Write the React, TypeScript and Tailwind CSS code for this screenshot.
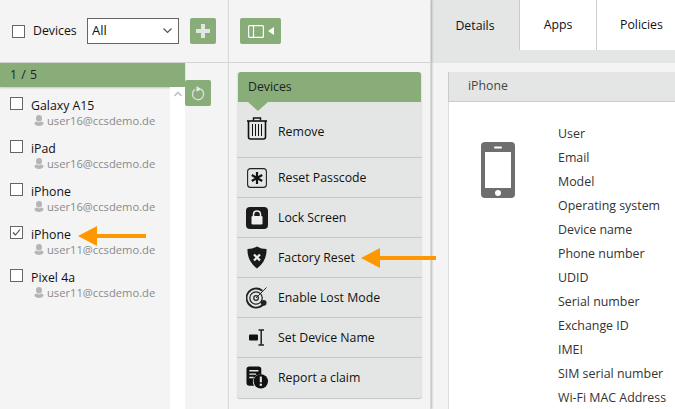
const devices = [
  { name: "Galaxy A15", user: "user16@ccsdemo.de" },
  { name: "iPad", user: "user16@ccsdemo.de" },
  { name: "iPhone", user: "user16@ccsdemo.de" },
  { name: "iPhone", user: "user11@ccsdemo.de", checked: true },
  { name: "Pixel 4a", user: "user11@ccsdemo.de" },
];

const fields = [
  "User",
  "Email",
  "Model",
  "Operating system",
  "Device name",
  "Phone number",
  "UDID",
  "Serial number",
  "Exchange ID",
  "IMEI",
  "SIM serial number",
  "Wi-Fi MAC Address",
];

function Checkbox({ checked }: { checked?: boolean }) {
  return (
    <span className="flex h-[13px] w-[13px] shrink-0 items-center justify-center border border-[#666] bg-white">
      {checked && (
        <svg width="11" height="11" viewBox="0 0 11 11" fill="none">
          <path d="M2 5.5 L4.5 8 L9 2.5" stroke="#444" strokeWidth="1.1" />
        </svg>
      )}
    </span>
  );
}

function Arrow({ width }: { width: number }) {
  return (
    <svg width={width} height="20" viewBox={`0 0 ${width} 20`} className="shrink-0">
      <path d={`M0 10 L19 0 V8 H${width} V12 H19 V20 Z`} fill="#ff9800" />
    </svg>
  );
}

function UserIcon() {
  return (
    <svg width="10" height="11" viewBox="0 0 10 11" fill="#b5b5b5">
      <ellipse cx="5" cy="3.2" rx="3" ry="3.2" />
      <path d="M0.5 8 Q1 6.8 2.6 6.6 Q5 8.2 7.4 6.6 Q9 6.8 9.5 8 V9 Q8 11 5 11 Q2 11 0.5 9 Z" />
    </svg>
  );
}

function TrashIcon() {
  return (
    <svg width="22" height="23" viewBox="0 0 22 23" fill="none" stroke="#111">
      <path d="M1 4 H21" strokeWidth="1.6" />
      <path d="M7.5 3.5 V1 H14.5 V3.5" strokeWidth="1.4" />
      <path d="M2.5 4 V20 Q2.5 22 4.5 22 H17.5 Q19.5 22 19.5 20 V4" strokeWidth="1.6" />
      <path d="M6.5 7 V19 M9.5 7 V19 M12.5 7 V19 M15.5 7 V19" strokeWidth="1" />
    </svg>
  );
}

function PasscodeIcon() {
  return (
    <svg width="20" height="20" viewBox="0 0 20 20" fill="none">
      <rect x="0.6" y="0.6" width="18.8" height="18.8" rx="3" stroke="#222" strokeWidth="1.1" />
      <path d="M10 4 V16 M4.8 7 L15.2 13 M15.2 7 L4.8 13" stroke="#111" strokeWidth="2.2" />
    </svg>
  );
}

function LockIcon() {
  return (
    <svg width="22" height="22" viewBox="0 0 22 22">
      <rect width="22" height="22" rx="4" fill="#1a1a1a" />
      <path d="M7.5 9.5 V7.5 Q7.5 4 11 4 Q14.5 4 14.5 7.5 V9.5" fill="none" stroke="#eee" strokeWidth="1.5" />
      <rect x="5.5" y="9" width="11" height="8.5" rx="1.2" fill="#eee" />
    </svg>
  );
}

function ShieldIcon() {
  return (
    <svg width="20" height="23" viewBox="0 0 20 23">
      <path d="M10 0.5 Q14 3 19.5 3 Q20 15 10 22.5 Q0 15 0.5 3 Q6 3 10 0.5 Z" fill="#1a1a1a" />
      <path d="M7 8.5 L13 14.5 M13 8.5 L7 14.5" stroke="#eee" strokeWidth="2.2" />
    </svg>
  );
}

function RadarIcon() {
  return (
    <svg width="23" height="23" viewBox="0 0 23 23" fill="none" stroke="#222">
      <path d="M17 4.4 A10 10 0 1 0 20 15.5" strokeWidth="1.9" />
      <circle cx="10.5" cy="12" r="6.5" strokeWidth="1.3" />
      <circle cx="10.5" cy="12" r="2.4" strokeWidth="1.3" />
      <path d="M10.5 12 L21.5 1" strokeWidth="1" />
      <circle cx="18.5" cy="17" r="3" fill="#222" stroke="none" />
    </svg>
  );
}

function RenameIcon() {
  return (
    <svg width="16" height="17" viewBox="0 0 16 17" fill="none">
      <rect x="0" y="5.5" width="9" height="6" rx="1" fill="#111" />
      <path d="M9.5 1 H15 M9.5 16 H15 M12.2 1 V16" stroke="#222" strokeWidth="1.5" />
    </svg>
  );
}

function ClaimIcon() {
  return (
    <svg width="23" height="23" viewBox="0 0 23 23">
      <path d="M0.5 3 Q0.5 0 3.5 0 H13 Q16 0 16 3 V8.5 A7.5 7.5 0 0 0 8.5 20 H3.5 Q0.5 20 0.5 17 Z" fill="#111" />
      <path d="M3.5 4.5 H13 M3.5 8 H10.5 M3.5 11.5 H8" stroke="#e4e6e5" strokeWidth="1.5" />
      <circle cx="15.5" cy="15.5" r="7.5" fill="#111" />
      <path d="M15.5 10.5 V16.5" stroke="#e4e6e5" strokeWidth="2.2" />
      <circle cx="15.5" cy="19.2" r="1.3" fill="#e4e6e5" />
    </svg>
  );
}

const actions = [
  { label: "Reset Passcode", icon: <PasscodeIcon /> },
  { label: "Lock Screen", icon: <LockIcon /> },
  { label: "Factory Reset", icon: <ShieldIcon />, arrow: true },
  { label: "Enable Lost Mode", icon: <RadarIcon /> },
  { label: "Set Device Name", icon: <RenameIcon /> },
  { label: "Report a claim", icon: <ClaimIcon /> },
];

export default function App() {
  return (
    <div className="flex h-[409px] w-[675px] overflow-hidden bg-[#f4f4f4] font-['Open_Sans','Noto_Sans',sans-serif] text-[12.3px] text-[#111]">
      {/* device list */}
      <div className="w-[228px] shrink-0">
        <div className="flex h-[63px] items-center border-b border-[#d4d4d4] pl-3">
          <Checkbox />
          <span className="ml-2 w-[54px]">Devices</span>
          <div className="flex h-[26px] w-[92px] items-center justify-between border border-[#666] bg-white pl-1 pr-1.5 text-[13px]">
            All
            <svg width="9" height="6" viewBox="0 0 9 6" fill="none">
              <path d="M0.5 0.5 L4.5 4.5 L8.5 0.5" stroke="#555" strokeWidth="1.2" />
            </svg>
          </div>
          <button className="ml-[11px] flex h-[26px] w-[26px] items-center justify-center rounded-[2px] bg-[#88ad78]">
            <svg width="14" height="14" viewBox="0 0 14 14" fill="#e4e4e4">
              <path d="M5 0 H9 V5 H14 V9 H9 V14 H5 V9 H0 V5 H5 Z" />
            </svg>
          </button>
        </div>
        <div className="flex h-[346px]">
          <div className="flex w-[185px] shrink-0 flex-col">
            <div className="flex h-[24px] items-center bg-[#88ad78] pl-[10px] tracking-[0.5px] text-[#222] shadow-[0_1px_2px_rgba(0,0,0,0.2)]">
              1 / 5
            </div>
            <div className="flex flex-1">
              <div className="flex w-[170px] flex-col pt-[10px]">
                {devices.map((d, i) => (
                  <div key={i} className="flex h-[43px] pl-[10px]">
                    <Checkbox checked={d.checked} />
                    <div className="ml-2">
                      <div className="flex h-[17px] items-center gap-[7px] pt-[2px] leading-none">
                        {d.name}
                        {d.checked && <Arrow width={68} />}
                      </div>
                      <div className="-mt-[1px] flex items-center gap-[3px] pl-[3px] text-[11.2px] leading-[15px] text-[#8a8a8a]">
                        <UserIcon />
                        {d.user}
                      </div>
                    </div>
                  </div>
                ))}
              </div>
              <div className="flex w-[15px] justify-center bg-white pt-[4px]">
                <svg width="8" height="6" viewBox="0 0 8 6" fill="none">
                  <path d="M0.5 5 L4 1.5 L7.5 5" stroke="#c4c4c4" strokeWidth="1.6" />
                </svg>
              </div>
            </div>
          </div>
          <div className="pt-[17px]">
            <button className="flex h-[26px] w-[26px] items-center justify-center rounded-[2px] bg-[#88ad78]">
              <svg width="14" height="15" viewBox="0 0 14 15" fill="none">
                <path d="M9.8 3.2 A5.6 5.6 0 1 1 4 3.4" stroke="#dcdcdc" strokeWidth="1.4" />
                <path d="M5.5 0 L10.5 3.2 L5.5 5.8 Z" fill="#e8e8e8" />
              </svg>
            </button>
          </div>
        </div>
      </div>

      {/* actions */}
      <div className="relative z-10 w-[203px] shrink-0 border-x border-[#d8d8d8] shadow-[1px_0_2px_rgba(0,0,0,0.25)]">
        <div className="flex h-[63px] items-center border-b border-[#d4d4d4] pl-[11px]">
          <button className="flex h-[26px] w-[41px] items-center justify-center gap-[4px] rounded-[2px] bg-[#88ad78]">
            <svg width="16" height="13" viewBox="0 0 16 13" fill="none">
              <rect x="0.6" y="0.6" width="14.8" height="11.8" rx="1" stroke="#fff" strokeWidth="1.2" />
              <path d="M5.5 1 V12" stroke="#fff" strokeWidth="1.2" />
            </svg>
            <svg width="6" height="8" viewBox="0 0 6 8" fill="#fff">
              <path d="M6 0 V8 L0 4 Z" />
            </svg>
          </button>
        </div>
        <div className="relative ml-[8px] mt-[9px] w-[185px] rounded-[3px] bg-[#e4e6e5] shadow-[0_1px_1px_rgba(0,0,0,0.2)]">
          <div className="mx-[1px] flex h-[30px] items-center rounded-t-[3px] bg-[#88ad78] pl-[10px] text-[#222]">Devices</div>
          <svg width="20" height="9" viewBox="0 0 20 9" className="absolute left-[11px] top-[30px]">
            <path d="M0 0 H20 L10 9 Z" fill="#88ad78" />
          </svg>
          <div className="flex h-[56px] items-center border-b border-[#c8c8c8] pl-[9px] pt-[6px]">
            <span className="relative -top-[4px] mr-[10px] flex w-[22px] shrink-0 justify-center">
              <TrashIcon />
            </span>
            Remove
          </div>
          {actions.map((a) => (
            <div key={a.label} className="flex h-[40px] items-center whitespace-nowrap border-b border-[#c8c8c8] pl-[9px] last:border-b-0 last:pb-[1px]">
              <span className="mr-[10px] flex w-[22px] shrink-0 justify-center">{a.icon}</span>
              <span className="relative top-[1px]">{a.label}</span>
              {a.arrow && (
                <span className="ml-[6px] flex">
                  <Arrow width={75} />
                </span>
              )}
            </div>
          ))}
        </div>
      </div>

      {/* details */}
      <div className="min-w-0 flex-1">
        <div className="flex h-[50px]">
          <div className="flex w-[88px] items-center justify-center bg-[#e4e6e5] pt-[2px] font-medium">Details</div>
          <div className="flex w-[77px] items-center justify-center border-l border-[#ccc] bg-white font-medium">Apps</div>
          <div className="flex flex-1 items-center border-l border-[#ccc] bg-white pl-[23px] font-medium">Policies</div>
        </div>
        <div className="h-[13px] bg-[#e4e6e5]" />
        <div className="pl-[17px] pt-[9px]">
          <div className="flex h-[30px] items-center border-b border-l border-[#ccc] bg-[#e4e6e5] pl-[19px] text-[#444]">iPhone</div>
          <div className="flex h-[320px] overflow-hidden border-l border-[#ddd] bg-white pl-[32px] pt-[40px]">
            <svg width="34" height="56" viewBox="0 0 34 56" className="shrink-0">
              <rect width="34" height="56" rx="4" fill="#6e6e70" />
              <rect x="4" y="10" width="26" height="36" fill="#fff" />
              <rect x="13" y="4.5" width="8" height="2" rx="1" fill="#fff" />
              <circle cx="17" cy="51" r="3" fill="#fff" />
            </svg>
            <div className="-mt-[20px] ml-[43px] flex flex-col text-[12.4px] text-[#333]">
              {fields.map((f) => (
                <div key={f} className="h-[24px] whitespace-nowrap leading-[24px]">
                  {f}
                </div>
              ))}
            </div>
          </div>
        </div>
      </div>
    </div>
  );
}
